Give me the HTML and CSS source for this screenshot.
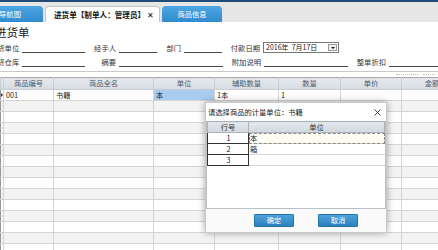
FILE: index.html
```html
<!DOCTYPE html>
<html lang="zh">
<head>
  <meta charset="UTF-8" />
  <title>进货单</title>
  <link rel="stylesheet" href="styles.css">
</head>
<body>
  <div class="topline"></div>

  <!-- 标签栏 -->
  <div class="tabbar">
    <div class="tab tab-first">导航图</div>
    <div class="tab tab-active">进货单【制单人：管理员】<span class="tab-close">✕</span></div>
    <div class="tab tab-blue">商品信息</div>
  </div>

  <div class="doc">
    <h1 class="doc-title">进货单</h1>

    <div class="form-row row-a">
      <span class="lbl">供货单位</span><span class="line"></span>
      <span class="lbl">经手人</span><span class="line"></span>
      <span class="lbl">部门</span><span class="line"></span>
      <span class="lbl">付款日期</span>
      <span class="datebox">2016年&nbsp; 7月17日<span class="drop"><span class="tri"></span></span></span>
    </div>
    <div class="form-row row-b">
      <span class="lbl">收货仓库</span><span class="line"></span>
      <span class="lbl">摘要</span><span class="line"></span>
      <span class="lbl">附加说明</span><span class="line"></span>
      <span class="lbl">整单折扣</span><span class="line"></span>
    </div>

    <div class="sep"></div>
    <div class="grip"><span class="dots d1"></span><span class="dots d2"></span></div>

    <!-- 明细表格 -->
    <table class="grid">
      <colgroup>
        <col class="c-rh"><col class="c-code"><col class="c-name"><col class="c-unit">
        <col class="c-aux"><col class="c-qty"><col class="c-price"><col class="c-amt">
      </colgroup>
      <thead>
        <tr><th></th><th>商品编号</th><th>商品全名</th><th>单位</th><th>辅助数量</th><th>数量</th><th>单价</th><th>金额</th></tr>
      </thead>
      <tbody id="rows">
        <tr><td class="rh"><span class="mark"></span></td><td>001</td><td>书籍</td><td class="sel">本</td><td>1本</td><td>1</td><td></td><td></td></tr>
      </tbody>
    </table>
  </div>

  <!-- 选择计量单位对话框 -->
  <div class="dialog">
    <div class="dlg-head">
      <span>请选择商品的计量单位：书籍</span>
      <svg class="dlg-x" width="7" height="7" viewBox="0 0 7 7"><path d="M0.5 0.5L6.5 6.5M6.5 0.5L0.5 6.5" stroke="#333" stroke-width="0.9"/></svg>
    </div>
    <div class="dlg-body">
      <table class="units">
        <thead><tr><th class="u-no">行号</th><th>单位</th></tr></thead>
        <tbody>
          <tr><td class="u-no">1</td><td class="u-focus">本</td></tr>
          <tr><td class="u-no">2</td><td>箱</td></tr>
          <tr><td class="u-no">3</td><td></td></tr>
        </tbody>
      </table>
    </div>
    <div class="dlg-foot">
      <button class="btn">确定</button>
      <button class="btn">取消</button>
    </div>
  </div>

  <script>
    // 补齐空行
    const body = document.getElementById('rows');
    for (let i = 0; i < 14; i++) {
      const tr = document.createElement('tr');
      tr.innerHTML = '<td class="rh"></td>' + '<td></td>'.repeat(7);
      body.appendChild(tr);
    }
  </script>
</body>
</html>
```

FILE: styles.css
```css
/* ===== 基础 ===== */
body {
  margin: 0;
  width: 438px;
  height: 250px;
  overflow: hidden;
  position: relative;
  background: #fff;
  font-family: "Noto Sans CJK SC", "Liberation Sans", sans-serif;
  font-size: 7.3px;
  color: #333;
}
.topline {
  height: 2px;
  background: #1f4d78;
}
/* ===== 标签栏 ===== */
.tabbar {
  height: 20px;
  background: #e6e6e6;
  display: flex;
  align-items: flex-end;
  gap: 2px;
}
.tab {
  height: 16px;
  line-height: 16px;
  box-sizing: border-box;
  border-radius: 4px 4px 0 0;
  text-align: center;
  white-space: nowrap;
}
.tab-first,
.tab-blue {
  background: linear-gradient(#4ea5e2, #2f8bd0);
  color: #fff;
}
.tab-first {
  width: 66px;
  margin-left: -23px;
}
.tab-blue {
  width: 60px;
}
.tab-active {
  width: 115px;
  background: #fff;
  border: 1px solid #c4c4c4;
  border-bottom: none;
  line-height: 15px;
  color: #111;
  font-weight: bold;
  padding-left: 8px;
  text-align: left;
  font-size: 7.6px;
}
.tab-close {
  font-weight: normal;
  margin-left: 2px;
}
/* ===== 单据头 ===== */
.doc {
  margin-left: -10px;
}
.doc-title {
  margin: 3px 0 0 5px;
  height: 15px;
  line-height: 15px;
  font-size: 11.5px;
  font-weight: normal;
  color: #222;
}
.form-row {
  display: grid;
  height: 11px;
  align-items: end;
  margin-top: 2px;
}
.row-b {
  margin-top: 3px;
}
.row-a {
  grid-template-columns: 32px 63px 34px 38px 27px 38px 41px 76px;
}
.row-b {
  grid-template-columns: 32px 63px 34px 104px 41px 84px 41px 70px;
}
.lbl {
  text-align: right;
  padding-right: 3px;
  line-height: 10px;
  white-space: nowrap;
}
.line {
  height: 9px;
  border-bottom: 1px solid #444;
}
.datebox {
  position: relative;
  height: 11px;
  box-sizing: border-box;
  border: 1px solid #777;
  line-height: 9px;
  padding-left: 2px;
  font-size: 7px;
  color: #222;
}
.drop {
  position: absolute;
  right: 1px;
  top: 1px;
  width: 9px;
  height: 7px;
  box-sizing: border-box;
  border: 1px solid #999;
  background: #f0f0f0;
  display: flex;
  justify-content: center;
  align-items: center;
}
.tri {
  border-left: 2px solid transparent;
  border-right: 2px solid transparent;
  border-top: 2px solid #111;
}
.sep {
  margin-top: 4px;
  height: 1px;
  background: #c8c8c8;
}
.grip {
  height: 5px;
  display: flex;
  justify-content: flex-end;
  align-items: center;
  gap: 5px;
  padding-right: 3px;
}
.dots {
  height: 1px;
  border-top: 1px dotted #b8b8b8;
}
.d1 { width: 22px; }
.d2 { width: 12px; }
/* ===== 明细表格 ===== */
.grid {
  border-collapse: collapse;
  table-layout: fixed;
  width: 462px;
  margin-left: 10px;
  border-top: 1px solid #a8a8a8;
}
.c-rh { width: 3px; }
.c-code { width: 50px; }
.c-name { width: 100px; }
.c-unit { width: 61px; }
.c-aux { width: 64px; }
.c-qty { width: 62px; }
.c-price { width: 61px; }
.c-amt { width: 61px; }
.grid th {
  height: 11px;
  padding: 0;
  background: linear-gradient(#e6eaee, #d6dce2);
  border: 1px solid #c6ccd2;
  border-top: none;
  font-weight: normal;
  color: #4c5c70;
  line-height: 11px;
  white-space: nowrap;
}
.grid td {
  height: 10px;
  padding: 0 0 0 2px;
  border: 1px solid #d4d4d4;
  line-height: 10px;
  white-space: nowrap;
  overflow: hidden;
  color: #222;
}
.grid tbody tr:nth-child(even) td {
  background: #f3f3f3;
}
.grid td.rh {
  padding: 0;
  border-left: 1px solid #999;
  background: #fff;
}
.grid td.sel {
  background: #a9cdf1;
}
.mark {
  display: block;
  width: 0;
  border-top: 2px solid transparent;
  border-bottom: 2px solid transparent;
  border-left: 2px solid #333;
}
/* ===== 对话框 ===== */
.dialog {
  position: absolute;
  left: 205px;
  top: 102px;
  width: 182px;
  height: 131px;
  box-sizing: border-box;
  border: 1px solid #c8c8c8;
  background: #fafafa;
  box-shadow: 0 0 7px rgba(0, 0, 0, 0.35);
  display: flex;
  flex-direction: column;
}
.dlg-head {
  height: 18px;
  display: flex;
  justify-content: space-between;
  align-items: center;
  padding: 0 5px 0 2px;
  background: #fff;
  color: #222;
}
.dlg-body {
  height: 88px;
  background: #fff;
  border: 1px solid #b9c0c7;
  border-top: none;
  width: 180px;
  box-sizing: border-box;
}
.units {
  border-collapse: collapse;
  table-layout: fixed;
  width: 178px;
}
.units th {
  height: 10px;
  padding: 0;
  background: linear-gradient(#e4e8ec, #d2d8de);
  border: 1px solid #aab2ba;
  font-weight: normal;
  color: #333;
  line-height: 10px;
}
.units th.u-no {
  width: 40px;
}
.units td {
  height: 10px;
  padding: 0 0 0 1px;
  border-bottom: 1px solid #d8d8d8;
  line-height: 10px;
  color: #222;
}
.units td.u-no {
  text-align: center;
  border: 1px solid #333;
}
.units td.u-focus {
  background: #fdfdf3;
  outline: 1px dashed #888;
  outline-offset: -1px;
}
.dlg-foot {
  flex: 1;
  display: flex;
  align-items: center;
  padding-left: 48px;
  gap: 24px;
}
.btn {
  width: 40px;
  height: 13px;
  padding: 0;
  border: 1px solid #2572aa;
  border-radius: 1px;
  background: linear-gradient(#4ea2da, #2b80bd);
  color: #fff;
  font-family: inherit;
  font-size: 7.3px;
  line-height: 11px;
}
```
